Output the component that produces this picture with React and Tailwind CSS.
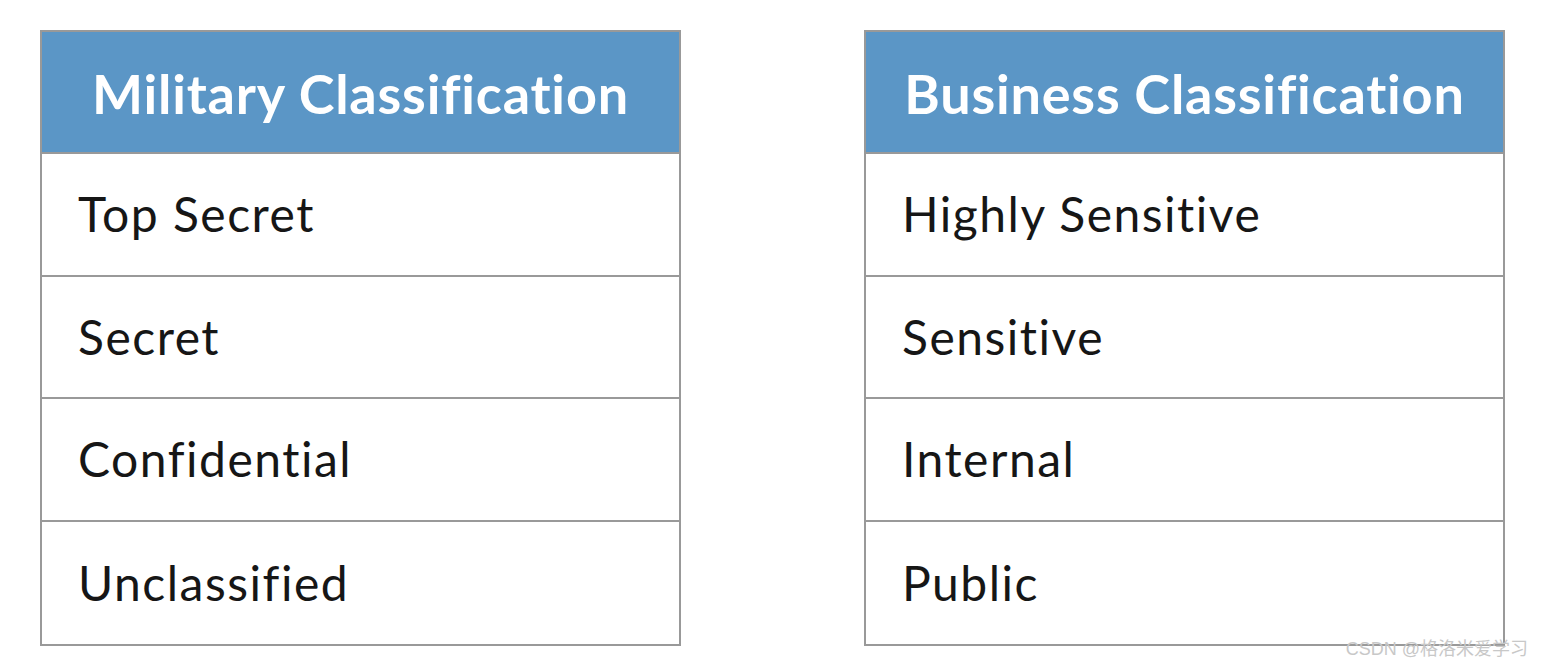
import React from 'react';

const tables = [
  { title: 'Military Classification', rows: ['Top Secret', 'Secret', 'Confidential', 'Unclassified'] },
  { title: 'Business Classification', rows: ['Highly Sensitive', 'Sensitive', 'Internal', 'Public'] },
];

function ClassTable({ title, rows }) {
  return (
    <div className="w-[641px] border-2 border-[#999999] bg-white">
      <div className="h-[122px] bg-[#5b96c6] flex items-center justify-center pt-[2px] text-white font-bold text-[54px] tracking-[0.8px] border-b-2 border-[#999999]">
        {title}
      </div>
      {rows.map((row, i) => (
        <div
          key={row}
          className={`h-[122.5px] flex items-center pl-[36px] text-[48px] tracking-[1.5px] text-[#161616] ${i < rows.length - 1 ? 'border-b-2 border-[#999999]' : ''}`}
        >
          {row}
        </div>
      ))}
    </div>
  );
}

export default function App() {
  return (
    <div className="relative w-[1542px] h-[671px] bg-white" style={{ fontFamily: 'Lato, "Noto Sans", sans-serif' }}>
      <div className="flex gap-[183px] pl-[40px] pt-[30px]">
        {tables.map((t) => (
          <ClassTable key={t.title} title={t.title} rows={t.rows} />
        ))}
      </div>
      <div
        className="absolute right-[14px] bottom-[8px] text-[18px] text-[#c8c8c8]"
        style={{ fontFamily: '"Liberation Sans", "Noto Sans CJK SC", sans-serif' }}
      >
        CSDN @格洛米爱学习
      </div>
    </div>
  );
}
